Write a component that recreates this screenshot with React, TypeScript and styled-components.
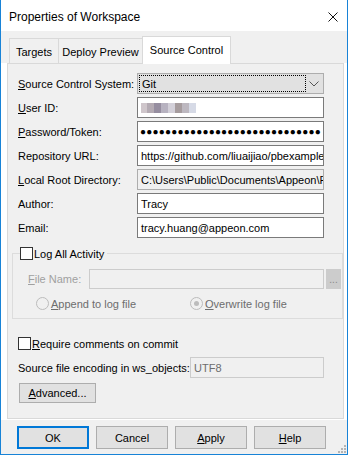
import React from "react";
import styled, { createGlobalStyle } from "styled-components";

const Global = createGlobalStyle`
  html, body { margin: 0; padding: 0; background: #fff; }
  body { font-family: "Liberation Sans", Arial, sans-serif; font-size: 11px; color: #000; }
  * { box-sizing: border-box; }
  u { text-decoration: underline; text-underline-offset: 1px; }
`;

const Window = styled.div`
  width: 348px;
  height: 455px;
  display: flex;
  flex-direction: column;
  border: 1px solid #1883d7;
  border-top: none;
  background: #f0f0f0;
  position: relative;
  overflow: hidden;
`;

const TitleBar = styled.div`
  height: 31px;
  flex: none;
  background: #fff;
  display: flex;
  align-items: center;
  justify-content: space-between;
  padding: 2px 9px 0 8px;
  font-size: 12px;
`;

const TabStrip = styled.div`
  height: 32px;
  flex: none;
  display: flex;
  align-items: flex-end;
  padding-left: 8px;
`;

const Tab = styled.div<{ $active?: boolean; $w: number }>`
  width: ${(p) => p.$w}px;
  height: ${(p) => (p.$active ? 28 : 25)}px;
  margin-left: -1px;
  margin-bottom: ${(p) => (p.$active ? -1 : 0)}px;
  border: 1px solid #d9d9d9;
  border-bottom: none;
  background: ${(p) => (p.$active ? "#fff" : "#f0f0f0")};
  display: flex;
  align-items: center;
  justify-content: center;
  padding-top: ${(p) => (p.$active ? 0 : 2)}px;
  padding-bottom: ${(p) => (p.$active ? 2 : 0)}px;
  position: relative;
  z-index: ${(p) => (p.$active ? 1 : 0)};
  white-space: nowrap;
  &:first-child { margin-left: 0; }
`;

const Band = styled.div`
  flex: none;
  background: #fff;
  padding: 0 3px 1px 6px;
`;

const Panel = styled.div`
  height: 356px;
  border: 1px solid #d9d9d9;
  background: #f0f0f0;
  display: flex;
  flex-direction: column;
  padding: 9px 0 0 10px;
`;

const FormGrid = styled.div`
  display: grid;
  grid-template-columns: 119px 187px;
  grid-auto-rows: 21px;
  row-gap: 3px;
  align-items: center;
`;

const Label = styled.div<{ $disabled?: boolean }>`
  white-space: nowrap;
  color: ${(p) => (p.$disabled ? "#a0a0a0" : "#000")};
`;

const Field = styled.div<{ $variant?: "normal" | "readonly" | "disabled" }>`
  height: 21px;
  border: 1px solid
    ${(p) => (p.$variant === "disabled" ? "#cccccc" : p.$variant === "readonly" ? "#adadad" : "#7a7a7a")};
  background: ${(p) => (p.$variant && p.$variant !== "normal" ? "#f0f0f0" : "#fff")};
  color: ${(p) => (p.$variant === "disabled" ? "#6d6d6d" : "#000")};
  padding: 0 2px 0 3px;
  display: flex;
  align-items: center;
  white-space: nowrap;
  overflow: hidden;
`;

const Combo = styled.div`
  height: 21px;
  border: 1px solid #adadad;
  background: #e1e1e1;
  display: flex;
  align-items: center;
  padding: 1px 2px 1px 1px;
`;

const FocusBox = styled.div`
  width: 167px;
  height: 17px;
  border: 1px dotted #000;
  display: flex;
  align-items: center;
  padding-left: 2px;
`;

const Chevron = styled.svg`
  margin-left: auto;
  margin-right: 2px;
`;

const Dots = styled.span`
  font-family: "Liberation Sans", Arial, sans-serif;
  font-size: 10px;
  letter-spacing: 0.2px;
  line-height: 1;
  margin-left: -1px;
`;

const GroupBox = styled.fieldset`
  margin: 9px 0 0 -6px;
  width: 331px;
  padding: 0 0 8px 0;
  border: 1px solid #dcdcdc;
  min-width: 0;
`;

const Legend = styled.legend`
  margin-left: 7px;
  padding: 0 3px 0 0;
  display: flex;
  align-items: center;
  height: 13px;
`;

const CheckBox = styled.span`
  width: 13px;
  height: 13px;
  border: 1px solid #333;
  background: #fff;
  flex: none;
  margin-right: 1px;
`;

const CheckRow = styled.div`
  display: flex;
  align-items: center;
  height: 13px;
  margin-top: 18px;
`;

const FileRow = styled.div`
  display: flex;
  align-items: center;
  margin-top: 9px;
  padding-left: 15px;
  height: 20px;
`;

const FileLabel = styled(Label)`
  width: 61px;
`;

const DisabledField = styled(Field)`
  width: 235px;
  height: 20px;
`;

const BrowseButton = styled.div`
  width: 15px;
  height: 20px;
  margin-left: 2px;
  background: #cccccc;
  color: #8a8a8a;
  display: flex;
  align-items: flex-end;
  justify-content: center;
  padding-bottom: 4px;
  font-size: 10px;
`;

const RadioRow = styled.div`
  display: grid;
  grid-template-columns: 154px auto;
  margin-top: 8px;
  padding-left: 23px;
  height: 13px;
`;

const RadioItem = styled.div`
  display: flex;
  align-items: center;
  color: #6d6d6d;
  gap: 2px;
`;

const Radio = styled.span<{ $checked?: boolean }>`
  width: 13px;
  height: 13px;
  border-radius: 50%;
  border: 1px solid #bcbcbc;
  background: #f0f0f0;
  display: flex;
  align-items: center;
  justify-content: center;
  &::after {
    content: "";
    width: 5px;
    height: 5px;
    border-radius: 50%;
    background: ${(p) => (p.$checked ? "#bcbcbc" : "transparent")};
  }
`;

const EncodingRow = styled.div`
  display: grid;
  grid-template-columns: 172px 134px;
  align-items: center;
  margin-top: 7px;
`;

const Button = styled.div<{ $default?: boolean; $w?: number }>`
  width: ${(p) => p.$w ?? 72}px;
  height: ${(p) => (p.$w ? 20 : 23)}px;
  background: #e1e1e1;
  border: ${(p) => (p.$default ? "2px solid #0078d7" : "1px solid #adadad")};
  display: flex;
  align-items: center;
  justify-content: center;
  white-space: nowrap;
  font-size: 11px;
`;

const AdvancedButton = styled(Button)`
  margin: 5px 0 0 1px;
`;

const Footer = styled.div`
  flex: 1;
  display: flex;
  gap: 7px;
  padding: 6px 0 0 16px;
`;

const Grip = styled.svg`
  position: absolute;
  right: 1px;
  bottom: 1px;
`;

const BlurBlocks = () => (
  <svg width="60" height="10" viewBox="0 0 60 10">
    <rect x="0" y="0" width="6" height="10" fill="#cfc6cb" />
    <rect x="6" y="0" width="7" height="10" fill="#b4abb3" />
    <rect x="13" y="0" width="7" height="10" fill="#968ea0" />
    <rect x="20" y="0" width="7" height="10" fill="#b7b2c0" />
    <rect x="27" y="0" width="7" height="10" fill="#d3d0d9" />
    <rect x="34" y="0" width="7" height="10" fill="#a69c9e" />
    <rect x="41" y="0" width="7" height="10" fill="#bdb8c0" />
    <rect x="48" y="0" width="7" height="10" fill="#d6dae6" />
  </svg>
);

export default function App() {
  return (
    <>
      <Global />
      <Window>
        <TitleBar>
          <span>Properties of Workspace</span>
          <svg width="10" height="10" viewBox="0 0 10 10">
            <path d="M0.5 0.5 L9.5 9.5 M9.5 0.5 L0.5 9.5" stroke="#111" strokeWidth="1" />
          </svg>
        </TitleBar>
        <TabStrip>
          <Tab $w={50}>Targets</Tab>
          <Tab $w={85}>Deploy Preview</Tab>
          <Tab $w={89} $active>Source Control</Tab>
        </TabStrip>
        <Band>
          <Panel>
            <FormGrid>
              <Label><u>S</u>ource Control System:</Label>
              <Combo>
                <FocusBox>Git</FocusBox>
                <Chevron width="10" height="6" viewBox="0 0 10 6">
                  <path d="M0.5 0.5 L5 5 L9.5 0.5" stroke="#555" fill="none" strokeWidth="1" />
                </Chevron>
              </Combo>
              <Label><u>U</u>ser ID:</Label>
              <Field><BlurBlocks /></Field>
              <Label><u>P</u>assword/Token:</Label>
              <Field><Dots>{"●".repeat(29)}</Dots></Field>
              <Label>Repository URL:</Label>
              <Field>https://github.com/liuaijiao/pbexample</Field>
              <Label><u>L</u>ocal Root Directory:</Label>
              <Field $variant="readonly">C:\Users\Public\Documents\Appeon\PB</Field>
              <Label>Author:</Label>
              <Field>Tracy</Field>
              <Label>Email:</Label>
              <Field>tracy.huang@appeon.com</Field>
            </FormGrid>

            <GroupBox>
              <Legend>
                <CheckBox />
                <span>Lo<u>g</u> All Activity</span>
              </Legend>
              <FileRow>
                <FileLabel $disabled><u>F</u>ile Name:</FileLabel>
                <DisabledField $variant="disabled" />
                <BrowseButton>...</BrowseButton>
              </FileRow>
              <RadioRow>
                <RadioItem><Radio /><span><u>A</u>ppend to log file</span></RadioItem>
                <RadioItem><Radio $checked /><span><u>O</u>verwrite log file</span></RadioItem>
              </RadioRow>
            </GroupBox>

            <CheckRow>
              <CheckBox />
              <span><u>R</u>equire comments on commit</span>
            </CheckRow>
            <EncodingRow>
              <Label>Source file encoding in ws_objects:</Label>
              <Field $variant="disabled">UTF8</Field>
            </EncodingRow>
            <AdvancedButton $w={77}><u>A</u>dvanced...</AdvancedButton>
          </Panel>
        </Band>
        <Footer>
          <Button $default>OK</Button>
          <Button>Cancel</Button>
          <Button><u>A</u>pply</Button>
          <Button><u>H</u>elp</Button>
        </Footer>
        <Grip width="9" height="9" viewBox="0 0 9 9">
          {[
            [7, 1], [7, 4], [4, 4], [7, 7], [4, 7], [1, 7],
          ].map(([x, y], i) => (
            <rect key={i} x={x} y={y} width="2" height="2" fill="#b4b4b4" />
          ))}
        </Grip>
      </Window>
    </>
  );
}
